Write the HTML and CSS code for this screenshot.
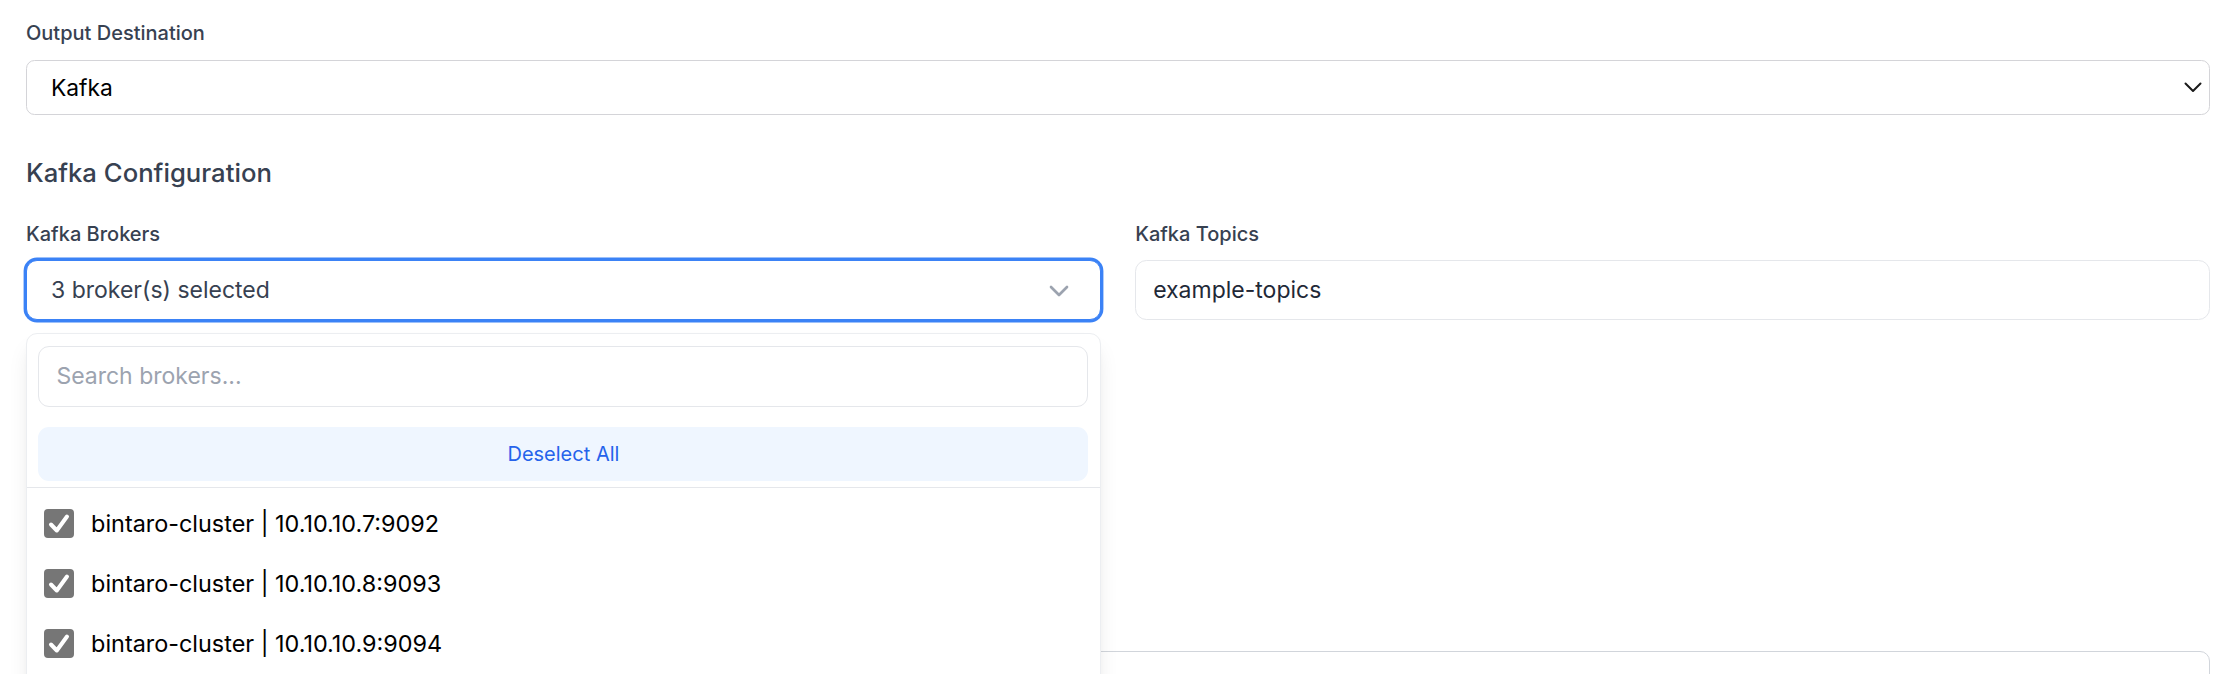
FILE: index.html
```html
<!DOCTYPE html>
<html lang="en">
<head>
<meta charset="utf-8">
<title>Kafka Output</title>
<link rel="stylesheet" href="styles.css">
</head>
<body>
<div class="page">
  <div class="field">
    <label class="label">Output Destination</label>
    <div class="select">
      <span class="select-value">Kafka</span>
      <svg class="select-chevron" width="18" height="11" viewBox="0 0 18 11"><polyline points="1.5,1.5 9,9 16.5,1.5" fill="none" stroke="#1a1a1a" stroke-width="2" stroke-linecap="round" stroke-linejoin="round"/></svg>
    </div>
  </div>

  <h2 class="section-title">Kafka Configuration</h2>

  <div class="grid">
    <div class="field">
      <label class="label">Kafka Brokers</label>
      <div class="ms">
        <div class="ms-trigger">
          <span class="ms-value">3 broker(s) selected</span>
          <svg class="ms-chevron" width="32" height="32" viewBox="0 0 24 24"><path d="m6 9 6 6 6-6" fill="none" stroke="#9ca3af" stroke-width="2" stroke-linecap="round" stroke-linejoin="round"/></svg>
        </div>
        <div class="ms-panel">
          <div class="ms-head">
            <div class="ms-search">Search brokers...</div>
            <div class="ms-toggle">Deselect All</div>
          </div>
          <div class="ms-list">
            <div class="ms-option">
              <span class="cb"><svg width="30" height="30" viewBox="0 0 30 30"><polyline points="7,15.5 12.8,21.5 23,7.5" fill="none" stroke="#fff" stroke-width="4" stroke-linecap="round" stroke-linejoin="round"/></svg></span>
              <span class="ms-text">bintaro-cluster | 10.10.10.7:9092</span>
            </div>
            <div class="ms-option">
              <span class="cb"><svg width="30" height="30" viewBox="0 0 30 30"><polyline points="7,15.5 12.8,21.5 23,7.5" fill="none" stroke="#fff" stroke-width="4" stroke-linecap="round" stroke-linejoin="round"/></svg></span>
              <span class="ms-text">bintaro-cluster | 10.10.10.8:9093</span>
            </div>
            <div class="ms-option">
              <span class="cb"><svg width="30" height="30" viewBox="0 0 30 30"><polyline points="7,15.5 12.8,21.5 23,7.5" fill="none" stroke="#fff" stroke-width="4" stroke-linecap="round" stroke-linejoin="round"/></svg></span>
              <span class="ms-text">bintaro-cluster | 10.10.10.9:9094</span>
            </div>
          </div>
        </div>
      </div>
    </div>
    <div class="field">
      <label class="label">Kafka Topics</label>
      <div class="input">example-topics</div>
    </div>
  </div>

  <div class="next-field">
    <div class="input-plain"></div>
  </div>
</div>
</body>
</html>
```

FILE: styles.css
```css
* { box-sizing: border-box; }

html, body {
  margin: 0;
  padding: 0;
  background: #ffffff;
}

body {
  font-family: Inter, "Noto Sans", "Liberation Sans", sans-serif;
  color: #374151;
  overflow: hidden;
  height: 674px;
}

.page {
  padding: 19px 30px 0 26px;
}

.label {
  display: block;
  font-size: 20px;
  line-height: 28.6px;
  font-weight: 500;
  color: #374151;
  margin-bottom: 12px;
}

.select {
  height: 55px;
  border: 1.4px solid #d4d4d8;
  border-radius: 8.5px;
  background: #fff;
  display: flex;
  align-items: center;
  justify-content: space-between;
  padding: 0 7px 0 24px;
}

.select-value {
  font-size: 22.8px;
  color: #000;
}

.select-chevron {
  margin-top: 1px;
}

.section-title {
  margin: 38px 0 0 0;
  font-size: 25.7px;
  line-height: 40px;
  font-weight: 500;
  color: #374151;
}

.grid {
  margin-top: 27px;
  display: grid;
  grid-template-columns: 1fr 1fr;
  column-gap: 34.3px;
}

.ms {
  position: relative;
}

.ms-trigger {
  height: 60px;
  border: 1.5px solid #3b82f6;
  box-shadow: 0 0 0 2.4px #3b82f6;
  border-radius: 11px;
  background: #fff;
  display: flex;
  align-items: center;
  justify-content: space-between;
  padding: 0 25px 0 24px;
}

.ms-value {
  font-size: 23px;
  color: #374151;
}

.ms-chevron {
  margin-top: 2px;
}

.ms-panel {
  position: absolute;
  top: calc(100% + 13px);
  left: 0;
  right: 0;
  height: 360px;
  background: #fff;
  border: 1.4px solid #eceef1;
  border-radius: 11px;
  box-shadow: 0 14px 22px -4px rgba(0, 0, 0, 0.1), 0 6px 10px -6px rgba(0, 0, 0, 0.1);
  z-index: 10;
}

.ms-head {
  padding: 11.4px 11.4px 6px 11.4px;
  border-bottom: 1.4px solid #e5e7eb;
}

.ms-search {
  height: 61.5px;
  border: 1.4px solid #e5e7eb;
  border-radius: 11px;
  display: flex;
  align-items: center;
  padding: 0 17px;
  font-size: 23px;
  color: #9ca3af;
}

.ms-toggle {
  margin-top: 19.5px;
  height: 54px;
  border-radius: 11px;
  background: #eff6ff;
  color: #2563eb;
  font-size: 20px;
  display: flex;
  align-items: center;
  justify-content: center;
}

.ms-list {
  padding-top: 6px;
}

.ms-option {
  height: 60px;
  display: flex;
  align-items: center;
  padding-left: 16.6px;
}

.cb {
  width: 30px;
  height: 29.4px;
  border-radius: 4px;
  background: #767676;
  display: flex;
  align-items: center;
  justify-content: center;
  flex: none;
}

.ms-text {
  margin-left: 17.5px;
  font-size: 23.4px;
  color: #000;
}

.input {
  height: 60px;
  border: 1.4px solid #e5e7eb;
  border-radius: 11.4px;
  display: flex;
  align-items: center;
  padding: 0 17px;
  font-size: 23px;
  color: #1f2937;
}

.next-field {
  margin-top: 331px;
}

.input-plain {
  height: 60px;
  border: 1.4px solid #d1d5db;
  border-radius: 10px;
  background: #fff;
}
```
